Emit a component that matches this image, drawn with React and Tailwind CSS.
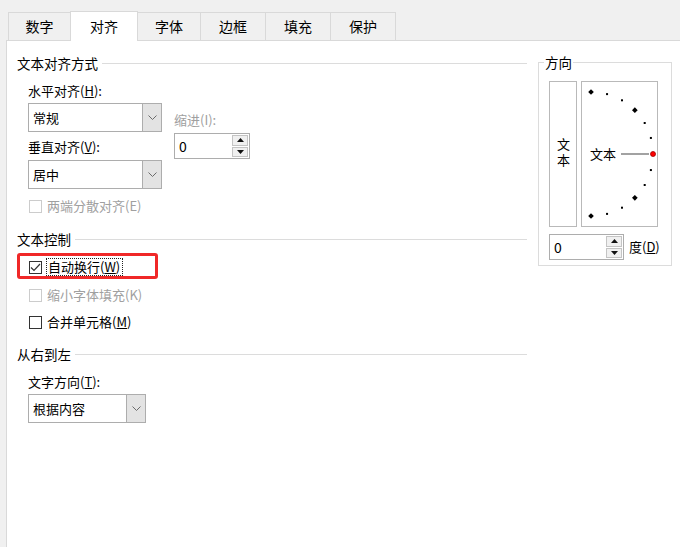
import React from 'react';

const tabs = ['数字', '对齐', '字体', '边框', '填充', '保护'];

const Chevron = () => (
  <svg width="9" height="5" viewBox="0 0 9 5" fill="none">
    <path d="M0.5 0.5 L4.5 4.5 L8.5 0.5" stroke="#6b6b6b" strokeWidth="1" />
  </svg>
);

const Combo = ({ text, width }) => (
  <div className={`flex h-[29px] border border-[#adadad] bg-white ${width}`}>
    <div className="flex flex-1 items-center pl-[4px] text-[13px] text-black">{text}</div>
    <div className="flex w-[19px] items-center justify-center border-l border-[#adadad] bg-[#e3e3e3]">
      <Chevron />
    </div>
  </div>
);

const Arrow = ({ up }) => (
  <svg width="7" height="4" viewBox="0 0 7 4">
    <path d={up ? 'M0 4 L3.5 0 L7 4 Z' : 'M0 0 L3.5 4 L7 0 Z'} fill="#111" />
  </svg>
);

const Spin = ({ width }) => (
  <div className={`flex h-[26px] border border-[#adadad] bg-white ${width}`}>
    <div className="flex flex-1 items-center pl-[4px] text-[14px] text-black">0</div>
    <div className="flex w-[18px] flex-col gap-px p-px">
      <div className="flex flex-1 items-center justify-center border border-[#c4c4c4] bg-[#f0f0f0]">
        <Arrow up />
      </div>
      <div className="flex flex-1 items-center justify-center border border-[#c4c4c4] bg-[#f0f0f0]">
        <Arrow />
      </div>
    </div>
  </div>
);

const Header = ({ children }) => (
  <div className="flex h-[18px] items-center text-[13.5px] leading-[18px] text-black">
    <span>{children}</span>
    <div className="ml-[4px] h-px flex-1 bg-[#dcdcdc]" />
  </div>
);

const Check = ({ checked, disabled, children }) => (
  <div className="flex h-[18px] items-center">
    <div
      className={`ml-px flex h-[13px] w-[13px] items-center justify-center border bg-white ${
        disabled ? 'border-[#cccccc]' : 'border-[#333333]'
      }`}
    >
      {checked && (
        <svg width="11" height="9" viewBox="0 0 11 9" fill="none">
          <path d="M1 4.5 L4 7.5 L10 1" stroke="#333" strokeWidth="1.2" />
        </svg>
      )}
    </div>
    <div className={`ml-[5px] text-[13px] leading-[18px] ${disabled ? 'text-[#a0a0a0]' : 'text-black'}`}>
      {children}
    </div>
  </div>
);

const Dial = () => {
  const cx = 9;
  const cy = 72;
  const r = 62;
  const marks = [];
  for (let a = 90; a >= -90; a -= 15) {
    const rad = (a * Math.PI) / 180;
    const x = cx + r * Math.cos(rad);
    const y = cy - r * Math.sin(rad);
    marks.push({ a, x, y });
  }
  return (
    <svg width="75" height="144" viewBox="0 0 75 144">
      {marks.map(({ a, x, y }) => {
        if (a === 0) return null;
        if (a % 45 === 0) {
          return (
            <rect
              key={a}
              x={x - 2}
              y={y - 2}
              width="4"
              height="4"
              fill="#000"
              transform={`rotate(45 ${x} ${y})`}
            />
          );
        }
        return <rect key={a} x={x - 1} y={y - 1} width="2" height="2" fill="#000" />;
      })}
      <text x="8" y="77" fontSize="13" fill="#000" fontFamily="'Noto Sans CJK SC', sans-serif">
        文本
      </text>
      <line x1="39" y1="72" x2="67" y2="72" stroke="#707070" strokeWidth="1.3" />
      <circle cx="71" cy="72" r="2.5" fill="#ff0000" stroke="#a00000" strokeWidth="0.8" />
    </svg>
  );
};

export default function App() {
  return (
    <div className="flex h-[547px] w-[680px] flex-col overflow-hidden bg-[#f0f0f0] font-['Microsoft_YaHei','Noto_Sans_CJK_SC',sans-serif]">
      <div className="flex h-[40px] items-end pl-[8px]">
        {tabs.map((t, i) =>
          i === 1 ? (
            <div
              key={t}
              className="relative z-10 -mb-px flex h-[30px] w-[68px] items-center justify-center border border-b-0 border-[#d9d9d9] bg-white text-[14px] text-black"
            >
              {t}
            </div>
          ) : (
            <div
              key={t}
              className={`flex h-[28px] items-center justify-center border border-b-0 border-[#d9d9d9] bg-[#f0f0f0] text-[14px] text-black ${
                i === 0 ? 'w-[62px]' : i === 2 ? 'w-[63px] border-l-0' : 'w-[65px] border-l-0'
              } ${i === 0 ? 'border-r-0' : ''}`}
            >
              {t}
            </div>
          )
        )}
      </div>
      <div className="ml-[6px] flex flex-1 border-l border-t border-[#d9d9d9] bg-white">
        <div className="w-[520px] pl-[10px]">
          <div className="mt-[13px]">
            <Header>文本对齐方式</Header>
          </div>
          <div className="pl-[11px]">
            <div className="flex">
              <div className="w-[134px]">
                <div className="mt-[10px] h-[18px] text-[13px] leading-[18px] text-black">
                  水平对齐(<span className="underline">H</span>):
                </div>
                <div className="mt-[3px]">
                  <Combo text="常规" width="w-[134px]" />
                </div>
                <div className="mt-[6px] h-[18px] text-[13px] leading-[18px] text-black">
                  垂直对齐(<span className="underline">V</span>):
                </div>
                <div className="mt-[4px]">
                  <Combo text="居中" width="w-[134px]" />
                </div>
              </div>
              <div className="ml-[12px]">
                <div className="mt-[39px] h-[18px] text-[13px] leading-[18px] text-[#a0a0a0]">缩进(I):</div>
                <div className="mt-[4px]">
                  <Spin width="w-[76px]" />
                </div>
              </div>
            </div>
            <div className="mt-[8px]">
              <Check disabled>两端分散对齐(E)</Check>
            </div>
          </div>
          <div className="mt-[15px]">
            <Header>文本控制</Header>
          </div>
          <div className="pl-[11px]">
            <div className="relative mt-[10px]">
              <div className="absolute left-[-11px] top-[-5px] h-[26px] w-[141px] rounded-[3px] border-[3px] border-[#f02828]" />
              <div className="flex h-[18px] items-center">
                <div className="ml-px flex h-[13px] w-[13px] items-center justify-center border border-[#333333] bg-white">
                  <svg width="11" height="9" viewBox="0 0 11 9" fill="none">
                    <path d="M1 4.5 L4 7.5 L10 1" stroke="#333" strokeWidth="1.2" />
                  </svg>
                </div>
                <div className="ml-[4px] border border-dotted border-[#222] pl-px pr-[2px] text-[13px] leading-[16px] text-black">
                  自动换行(<span className="underline">W</span>)
                </div>
              </div>
            </div>
            <div className="mt-[10px]">
              <Check disabled>缩小字体填充(K)</Check>
            </div>
            <div className="mt-[9px]">
              <Check>
                合并单元格(<span className="underline">M</span>)
              </Check>
            </div>
          </div>
          <div className="mt-[14px]">
            <Header>从右到左</Header>
          </div>
          <div className="pl-[11px]">
            <div className="mt-[10px] h-[18px] text-[13px] leading-[18px] text-black">
              文字方向(<span className="underline">T</span>):
            </div>
            <div className="mt-[3px]">
              <Combo text="根据内容" width="w-[118px]" />
            </div>
          </div>
        </div>
        <div className="relative ml-[11px] mt-[21px] h-[204px] w-[134px] border border-[#dcdcdc]">
          <div className="absolute left-[5px] top-[-10px] bg-white px-px text-[13.5px] leading-[18px] text-black">方向</div>
          <div className="pl-[10px] pt-[18px]">
            <div className="flex gap-[4px]">
              <div className="flex h-[146px] w-[28px] items-center justify-center border border-[#b9b9b9]">
                <span className="text-[13px] leading-[18px] tracking-[3px] text-black [text-orientation:upright] [writing-mode:vertical-rl]">
                  文本
                </span>
              </div>
              <div className="h-[146px] w-[77px] border border-[#b9b9b9]">
                <Dial />
              </div>
            </div>
            <div className="mt-[7px] flex items-center">
              <Spin width="w-[75px]" />
              <div className="ml-[5px] text-[13px] leading-[18px] text-black">
                度(<span className="underline">D</span>)
              </div>
            </div>
          </div>
        </div>
      </div>
    </div>
  );
}
